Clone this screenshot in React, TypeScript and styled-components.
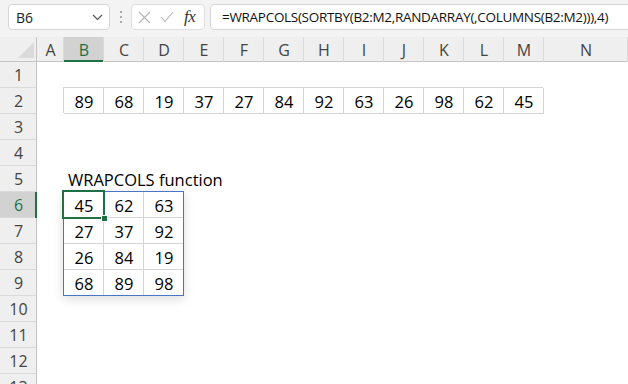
import React from "react";
import styled, { createGlobalStyle } from "styled-components";

const UI_FONT = `"Open Sans", "Noto Sans", sans-serif`;
const CELL_FONT = `"Open Sans", "Noto Sans", sans-serif`;
const GREEN = "#1e7145";
const CELL_LINE = "#d4d4d4";

const GlobalStyle = createGlobalStyle`
  html, body {
    margin: 0;
    padding: 0;
    background: #fff;
    overflow: hidden;
  }
`;

const Window = styled.div`
  width: 628px;
  height: 384px;
  overflow: hidden;
  display: flex;
  flex-direction: column;
  background: #fff;
`;

const FormulaBar = styled.div`
  flex: none;
  box-sizing: border-box;
  height: 37px;
  padding: 4px 0 0 8px;
  display: flex;
  align-items: flex-start;
  background: #f3f3f3;
  font-family: ${UI_FONT};
`;

const NameBox = styled.div`
  box-sizing: border-box;
  width: 102px;
  height: 26px;
  padding: 0 6px 0 7px;
  display: flex;
  align-items: center;
  justify-content: space-between;
  background: #fff;
  border: 1px solid #d6d6d6;
  border-radius: 4px;
  font-size: 14px;
  color: #222;
`;

const Grip = styled.div`
  width: 21px;
  height: 26px;
  display: flex;
  align-items: center;
  justify-content: center;
`;

const EditBox = styled.div`
  box-sizing: border-box;
  width: 74px;
  height: 26px;
  padding: 0 0 0 6px;
  display: flex;
  align-items: center;
  gap: 9px;
  background: #fff;
  border: 1px solid #dedede;
  border-radius: 4px;
`;

const Fx = styled.span`
  font-family: "Liberation Serif", serif;
  font-style: italic;
  font-size: 17px;
  color: #333;
  margin-left: 1px;
  letter-spacing: -0.5px;
`;

const FormulaInput = styled.div`
  box-sizing: border-box;
  flex: 1;
  height: 26px;
  margin: 0 -6px 0 5px;
  padding: 0 0 0 11px;
  display: flex;
  align-items: center;
  background: #fff;
  border: 1px solid #d6d6d6;
  border-radius: 4px;
  font-size: 13.5px;
  letter-spacing: -0.3px;
  color: #111;
  white-space: nowrap;
  overflow: hidden;
`;

const Sheet = styled.div`
  position: relative;
  flex: 1;
  display: grid;
  grid-template-columns: 37px 27px repeat(12, 40px) 1fr;
  grid-template-rows: 25px repeat(13, 26px);
`;

const Corner = styled.div`
  position: relative;
  background: #efefef;
  box-shadow: inset -1px 0 0 #c4c4c4, inset 0 -1px 0 #c4c4c4;

  &::after {
    content: "";
    position: absolute;
    right: 3px;
    bottom: 4px;
    width: 0;
    height: 0;
    border-left: 16px solid transparent;
    border-bottom: 16px solid #dadada;
  }
`;

const ColHeader = styled.div<{ $selected?: boolean }>`
  display: flex;
  align-items: center;
  justify-content: center;
  font-family: ${UI_FONT};
  font-size: 16px;
  color: ${(p) => (p.$selected ? GREEN : "#444")};
  background: ${(p) => (p.$selected ? "#d2d2d2" : "#efefef")};
  box-shadow: inset -1px 0 0 #dadada,
    inset 0 ${(p) => (p.$selected ? "-2px" : "-1px")} 0
      ${(p) => (p.$selected ? GREEN : "#c4c4c4")};
`;

const RowHeader = styled.div<{ $selected?: boolean }>`
  display: flex;
  align-items: center;
  justify-content: center;
  font-family: ${UI_FONT};
  font-size: 16px;
  color: ${(p) => (p.$selected ? GREEN : "#444")};
  background: ${(p) => (p.$selected ? "#d2d2d2" : "#efefef")};
  box-shadow: inset ${(p) => (p.$selected ? "-2px" : "-1px")} 0 0
      ${(p) => (p.$selected ? GREEN : "#c4c4c4")},
    inset 0 -1px 0 #dadada;
`;

const Cell = styled.div<{ $bordered?: boolean; $align?: "left" | "center" }>`
  display: flex;
  align-items: center;
  justify-content: ${(p) => (p.$align === "left" ? "flex-start" : "center")};
  padding: ${(p) => (p.$align === "left" ? "0 0 0 4px" : "0")};
  font-family: ${CELL_FONT};
  font-size: 16.5px;
  color: #000;
  white-space: nowrap;
  overflow: visible;
  box-shadow: ${(p) =>
    p.$bordered
      ? `inset -1px -1px 0 ${CELL_LINE}, -1px -1px 0 ${CELL_LINE}`
      : "none"};
`;

const SpillFrame = styled.div`
  position: absolute;
  left: 63px;
  top: 154px;
  width: 121px;
  height: 105px;
  box-sizing: border-box;
  border: 1px solid #4a74c4;
  box-shadow: 0 3px 10px rgba(0, 0, 0, 0.14);
  pointer-events: none;
`;

const ActiveCell = styled.div`
  position: absolute;
  left: 62px;
  top: 153px;
  width: 43px;
  height: 29px;
  box-sizing: border-box;
  border: 2px solid ${GREEN};
  pointer-events: none;

  &::after {
    content: "";
    position: absolute;
    right: -5px;
    bottom: -5px;
    width: 5px;
    height: 5px;
    background: ${GREEN};
    border: 1px solid #fff;
  }
`;

const COLUMNS = ["A", "B", "C", "D", "E", "F", "G", "H", "I", "J", "K", "L", "M", "N"];
const ROWS = 13;

const source = [89, 68, 19, 37, 27, 84, 92, 63, 26, 98, 62, 45];
const wrapped = [
  [45, 62, 63],
  [27, 37, 92],
  [26, 84, 19],
  [68, 89, 98],
];

function cellAt(row: number, col: number): { text?: string; bordered?: boolean; left?: boolean } {
  if (row === 2 && col >= 1 && col <= 12) {
    return { text: String(source[col - 1]), bordered: true };
  }
  if (row === 5 && col === 1) {
    return { text: "WRAPCOLS function", left: true };
  }
  if (row >= 6 && row <= 9 && col >= 1 && col <= 3) {
    return { text: String(wrapped[row - 6][col - 1]), bordered: true };
  }
  return {};
}

const Chevron = () => (
  <svg width="11" height="7" viewBox="0 0 11 7">
    <polyline points="1,1 5.5,5.5 10,1" fill="none" stroke="#555" strokeWidth="1.2" />
  </svg>
);

const Dots = () => (
  <svg width="4" height="14" viewBox="0 0 4 14">
    <circle cx="2" cy="2" r="1.1" fill="#9a9a9a" />
    <circle cx="2" cy="7" r="1.1" fill="#9a9a9a" />
    <circle cx="2" cy="12" r="1.1" fill="#9a9a9a" />
  </svg>
);

const CancelIcon = () => (
  <svg width="13" height="13" viewBox="0 0 13 13">
    <path d="M1 1 L12 12 M12 1 L1 12" stroke="#b4b4b4" strokeWidth="1.1" fill="none" />
  </svg>
);

const EnterIcon = () => (
  <svg width="14" height="12" viewBox="0 0 14 12">
    <path d="M1 6 L5 10.5 L13 1" stroke="#b4b4b4" strokeWidth="1.1" fill="none" />
  </svg>
);

export default function App() {
  return (
    <Window>
      <GlobalStyle />
      <FormulaBar>
        <NameBox>
          <span>B6</span>
          <Chevron />
        </NameBox>
        <Grip>
          <Dots />
        </Grip>
        <EditBox>
          <CancelIcon />
          <EnterIcon />
          <Fx>fx</Fx>
        </EditBox>
        <FormulaInput>=WRAPCOLS(SORTBY(B2:M2,RANDARRAY(,COLUMNS(B2:M2))),4)</FormulaInput>
      </FormulaBar>
      <Sheet>
        <Corner />
        {COLUMNS.map((c) => (
          <ColHeader key={c} $selected={c === "B"}>
            {c}
          </ColHeader>
        ))}
        {Array.from({ length: ROWS }, (_, i) => i + 1).map((row) => (
          <React.Fragment key={row}>
            <RowHeader $selected={row === 6}>{row}</RowHeader>
            {COLUMNS.map((c, ci) => {
              const cell = cellAt(row, ci);
              return (
                <Cell key={c} $bordered={cell.bordered} $align={cell.left ? "left" : "center"}>
                  {cell.text}
                </Cell>
              );
            })}
          </React.Fragment>
        ))}
        <SpillFrame />
        <ActiveCell />
      </Sheet>
    </Window>
  );
}
